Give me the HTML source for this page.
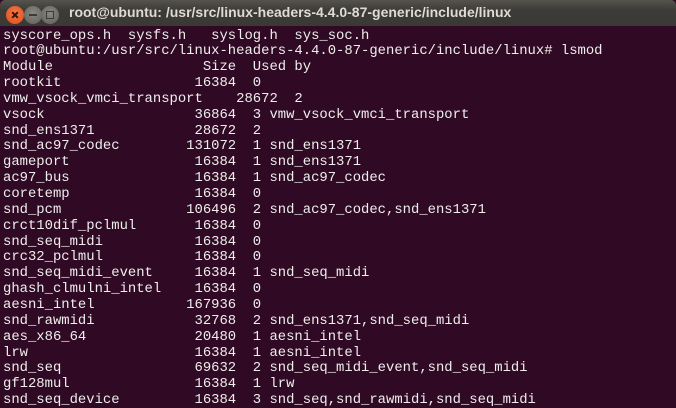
<!DOCTYPE html>
<html><head><meta charset="utf-8"><style>
html,body{margin:0;padding:0;width:676px;height:407px;overflow:hidden;background:#300a24;}
.tb{position:absolute;left:0;top:0;width:676px;height:26px;background:linear-gradient(#55534c,#3c3b37 40%,#3a3935);border-radius:5px 5px 0 0;z-index:2;}
.btn{position:absolute;top:6px;width:18px;height:18px;border-radius:50%;}
.c{left:6px;background:radial-gradient(circle at 50% 40%,#f47a4c,#df4a16);}
.m{left:24px;background:radial-gradient(circle at 50% 40%,#8a8882,#5f5e5a);}
.x{left:41px;background:radial-gradient(circle at 50% 40%,#8a8882,#5f5e5a);}
.c:before,.c:after{content:"";position:absolute;left:5px;top:8px;width:8px;height:2px;background:#3a1408;transform:rotate(45deg);}
.c:after{transform:rotate(-45deg);}
.m:before{content:"";position:absolute;left:5px;top:8px;width:8px;height:2px;background:#3c3b37;}
.x:before{content:"";position:absolute;left:5px;top:5px;width:6px;height:6px;border:1px solid #3c3b37;}
.t{position:absolute;left:69px;top:4px;font:bold 14px "Liberation Sans",sans-serif;color:#dfdbd2;white-space:pre;}
.l{position:absolute;left:3px;margin:0;font-family:"Liberation Mono",monospace;font-size:13.88px;line-height:15px;height:15px;color:#eeeeec;white-space:pre;}
</style></head><body>
<div class="tb"><div class="btn c"></div><div class="btn m"></div><div class="btn x"></div><div class="t">root@ubuntu: /usr/src/linux-headers-4.4.0-87-generic/include/linux</div></div>
<div class="l" style="top:28.5px">syscore_ops.h  sysfs.h   syslog.h  sys_soc.h</div>
<div class="l" style="top:44.35px">root@ubuntu:/usr/src/linux-headers-4.4.0-87-generic/include/linux# lsmod</div>
<div class="l" style="top:60.2px">Module                  Size  Used by</div>
<div class="l" style="top:76.05px">rootkit                16384  0</div>
<div class="l" style="top:91.9px">vmw_vsock_vmci_transport    28672  2</div>
<div class="l" style="top:107.75px">vsock                  36864  3 vmw_vsock_vmci_transport</div>
<div class="l" style="top:123.6px">snd_ens1371            28672  2</div>
<div class="l" style="top:139.45px">snd_ac97_codec        131072  1 snd_ens1371</div>
<div class="l" style="top:155.3px">gameport               16384  1 snd_ens1371</div>
<div class="l" style="top:171.15px">ac97_bus               16384  1 snd_ac97_codec</div>
<div class="l" style="top:187px">coretemp               16384  0</div>
<div class="l" style="top:202.85px">snd_pcm               106496  2 snd_ac97_codec,snd_ens1371</div>
<div class="l" style="top:218.7px">crct10dif_pclmul       16384  0</div>
<div class="l" style="top:234.55px">snd_seq_midi           16384  0</div>
<div class="l" style="top:250.4px">crc32_pclmul           16384  0</div>
<div class="l" style="top:266.25px">snd_seq_midi_event     16384  1 snd_seq_midi</div>
<div class="l" style="top:282.1px">ghash_clmulni_intel    16384  0</div>
<div class="l" style="top:297.95px">aesni_intel           167936  0</div>
<div class="l" style="top:313.8px">snd_rawmidi            32768  2 snd_ens1371,snd_seq_midi</div>
<div class="l" style="top:329.65px">aes_x86_64             20480  1 aesni_intel</div>
<div class="l" style="top:345.5px">lrw                    16384  1 aesni_intel</div>
<div class="l" style="top:361.35px">snd_seq                69632  2 snd_seq_midi_event,snd_seq_midi</div>
<div class="l" style="top:377.2px">gf128mul               16384  1 lrw</div>
<div class="l" style="top:393.05px">snd_seq_device         16384  3 snd_seq,snd_rawmidi,snd_seq_midi</div>
</body></html>
